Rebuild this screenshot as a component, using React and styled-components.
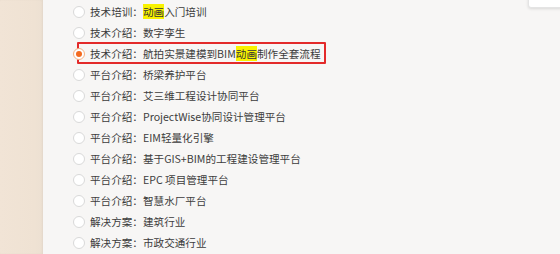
import React from "react";
import styled, { createGlobalStyle } from "styled-components";

const GlobalStyle = createGlobalStyle`
  html, body {
    margin: 0;
    padding: 0;
    background: #f7f6f5;
  }
  body {
    font-family: "Microsoft YaHei", "Noto Sans CJK SC", "Noto Sans", sans-serif;
  }
`;

const items = [
  { label: "技术培训：", parts: [["动画", true], ["入门培训", false]] },
  { label: "技术介绍：", parts: [["数字孪生", false]] },
  {
    label: "技术介绍：",
    parts: [["航拍实景建模到BIM", false], ["动画", true], ["制作全套流程", false]],
    checked: true,
  },
  { label: "平台介绍：", parts: [["桥梁养护平台", false]] },
  { label: "平台介绍：", parts: [["艾三维工程设计协同平台", false]] },
  { label: "平台介绍：", parts: [["ProjectWise协同设计管理平台", false]] },
  { label: "平台介绍：", parts: [["EIM轻量化引擎", false]] },
  { label: "平台介绍：", parts: [["基于GIS+BIM的工程建设管理平台", false]] },
  { label: "平台介绍：", parts: [["EPC 项目管理平台", false]] },
  { label: "平台介绍：", parts: [["智慧水厂平台", false]] },
  { label: "解决方案：", parts: [["建筑行业", false]] },
  { label: "解决方案：", parts: [["市政交通行业", false]] },
];

export default function App() {
  return (
    <>
      <GlobalStyle />
      <Page>
        <Strip />
        <Panel>
          <Corner />
          <List>
            {items.map((item, i) => (
              <Row key={i} marked={item.checked}>
                <Radio checked={item.checked} />
                <Text>
                  {item.label}
                  {item.parts.map(([t, hl], j) =>
                    hl ? <Mark key={j}>{t}</Mark> : <span key={j}>{t}</span>
                  )}
                </Text>
              </Row>
            ))}
          </List>
        </Panel>
      </Page>
    </>
  );
}

const Page = styled.div`
  display: flex;
  width: 560px;
  height: 254px;
  overflow: hidden;
`;

const Strip = styled.div`
  width: 43px;
  flex-shrink: 0;
  background: linear-gradient(90deg, #f1e4d6 0%, #efe2d3 80%, #ece0d2 100%);
  box-shadow: inset -1px 0 2px rgba(0, 0, 0, 0.04);
`;

const Panel = styled.div`
  position: relative;
  flex: 1;
  background: #f7f6f5;
`;

const Corner = styled.div`
  position: absolute;
  top: -4px;
  right: -4px;
  width: 34px;
  height: 10px;
  background: #fff;
  border: 1px solid #e4e4e4;
  border-radius: 3px;
  box-shadow: 0 1px 3px rgba(0, 0, 0, 0.12);
`;

const List = styled.div`
  display: flex;
  flex-direction: column;
  padding: 1px 0 0 30px;
`;

const Row = styled.div`
  position: relative;
  display: flex;
  align-items: center;
  gap: 5px;
  height: 21px;

  &::after {
    content: "";
    display: ${(p) => (p.marked ? "block" : "none")};
    position: absolute;
    left: 4px;
    top: -1px;
    width: 249px;
    height: 22px;
    box-sizing: border-box;
    border: 2px solid #e32a2a;
    border-radius: 1px;
  }
`;

const Radio = styled.span`
  width: 12px;
  height: 12px;
  flex-shrink: 0;
  box-sizing: border-box;
  border-radius: 50%;
  background: #fff;
  border: 1px solid ${(p) => (p.checked ? "#f4b184" : "#d9d9d9")};
  position: relative;
  z-index: 1;

  &::before {
    content: "";
    display: ${(p) => (p.checked ? "block" : "none")};
    position: absolute;
    left: 2px;
    top: 2px;
    width: 6px;
    height: 6px;
    border-radius: 50%;
    background: #f36a1f;
  }
`;

const Text = styled.span`
  font-size: 10.6px;
  color: #3c3c3c;
  white-space: nowrap;
  line-height: 16px;
`;

const Mark = styled.span`
  background: #f8f200;
  color: #333;
`;
